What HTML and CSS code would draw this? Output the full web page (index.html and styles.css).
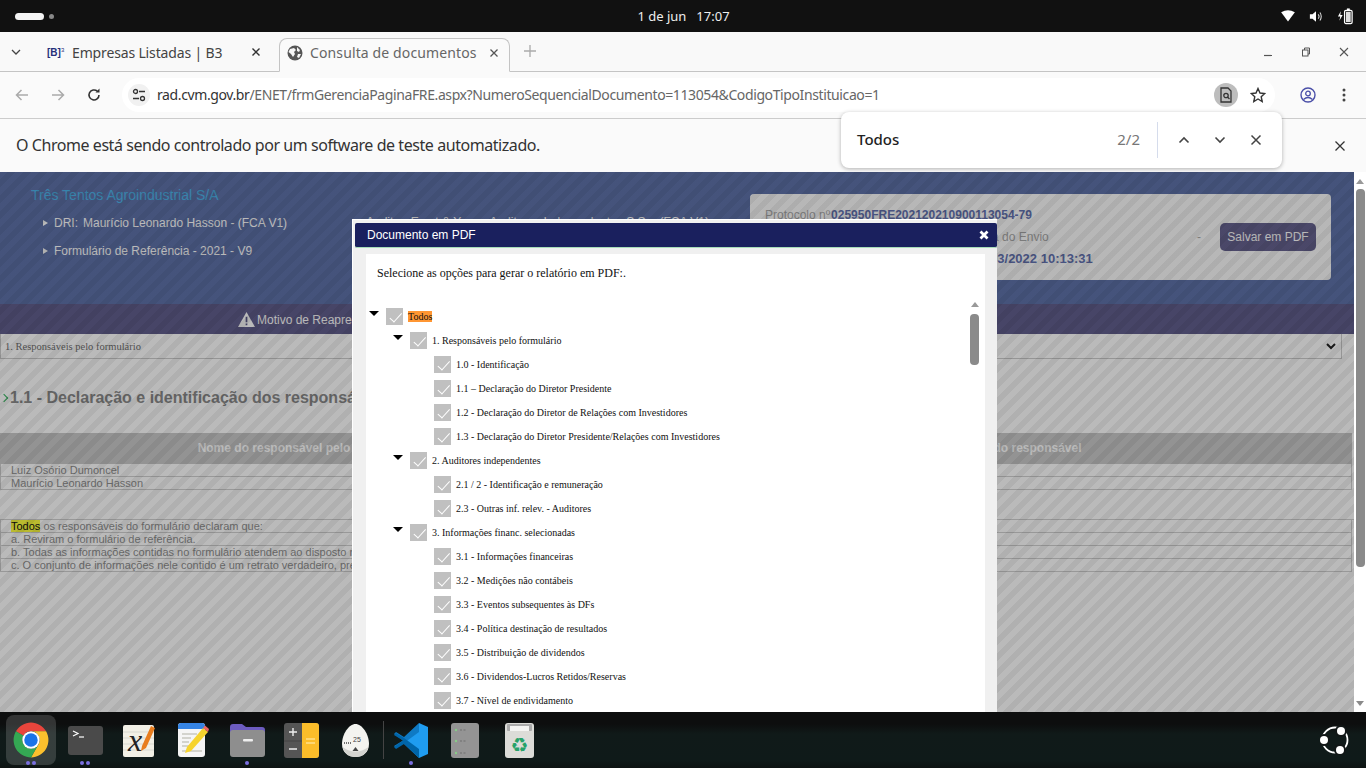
FILE: index.html
```html
<!DOCTYPE html>
<html lang="pt-BR">
<head>
    <meta charset="utf-8">
    <title>Consulta de documentos</title>
    <link rel="stylesheet" href="styles.css">
</head>
<body>
<div class="topbar">
    <div class="workspaces"><span class="ws_pill"></span><span class="ws_dot"></span></div>
    <div class="clock"><span>1 de jun</span><span>17:07</span></div>
    <div class="tray">
        <svg width="14" height="12" viewBox="0 0 16 14"><path d="M0 2.5Q8-2 16 2.5L8 13.5Z" fill="#fff"/></svg>
        <svg width="14" height="13" viewBox="0 0 16 14"><path d="M1 4.5H4L8 1V13L4 9.5H1Z" fill="#fff"/><path d="M10.5 4.5Q12.5 7 10.500 9.500M12.500 2.500Q15.500 7 12.500 11.500" fill="none" stroke="#ddd" stroke-width="1.2"/></svg>
        <svg width="17" height="18" viewBox="0 0 18 18"><path d="M4 4L1 9.500H3.500L2.500 14L6 8H3.500Z" fill="#fff"/><rect x="8" y="3" width="8" height="14" rx="1.500" fill="none" stroke="#fff" stroke-width="1.300"/><rect x="10.500" y="1" width="3" height="2" fill="#fff"/><rect x="9.500" y="4.500" width="5" height="11" fill="#ddd"/></svg>
    </div>
</div>

<div class="tabstrip">
    <svg class="tab_menu" width="10" height="6" viewBox="0 0 10 6"><path d="M1 1L5 5L9 1" fill="none" stroke="#444" stroke-width="1.3"/></svg>
    <div class="tab">
        <span class="b3_icon">[B]<sup>3</sup></span>
        <span class="tab_title">Empresas Listadas | B3</span>
        <svg class="tab_close" width="10" height="10" viewBox="0 0 10 10"><path d="M1.500 1.500L8.500 8.500M8.500 1.500L1.500 8.500" stroke="#333" stroke-width="1.400"/></svg>
    </div>
    <div class="tab tab_active">
        <svg width="16" height="16" viewBox="0 0 16 16"><circle cx="8" cy="8" r="7.500" fill="#555"/><path d="M3 4L7 3L9 5L7 7L8 9L6 12L4 9L1.500 7ZM10 2L13 5L12 7L10 6ZM11 9H14L12 13L10 12Z" fill="#f5f5f5"/></svg>
        <span class="tab_title">Consulta de documentos</span>
        <svg class="tab_close" width="10" height="10" viewBox="0 0 10 10"><path d="M1.500 1.500L8.500 8.500M8.500 1.500L1.500 8.500" stroke="#555" stroke-width="1.300"/></svg>
    </div>
    <svg class="new_tab" width="12" height="12" viewBox="0 0 12 12"><path d="M6 0V12M0 6H12" stroke="#aaa" stroke-width="1.300"/></svg>
    <div class="window_btns">
        <svg width="10" height="10" viewBox="0 0 10 10"><path d="M1 8.500H9" stroke="#555" stroke-width="1.200"/></svg>
        <svg width="10" height="10" viewBox="0 0 10 10"><rect x="1.500" y="3" width="5.500" height="6" fill="none" stroke="#555"/><path d="M3.500 3V1H8.500V7H7" fill="none" stroke="#555"/></svg>
        <svg width="10" height="10" viewBox="0 0 10 10"><path d="M1 1L9 9M9 1L1 9" stroke="#555" stroke-width="1.100"/></svg>
    </div>
</div>

<div class="toolbar">
    <svg class="nav_btn" width="16" height="16" viewBox="0 0 16 16"><path d="M14 8H2.500M7.500 3L2.500 8L7.500 13" fill="none" stroke="#aaa" stroke-width="1.500"/></svg>
    <svg class="nav_btn" width="16" height="16" viewBox="0 0 16 16"><path d="M2 8H13.500M8.500 3L13.500 8L8.500 13" fill="none" stroke="#aaa" stroke-width="1.500"/></svg>
    <svg class="nav_btn" width="16" height="16" viewBox="0 0 16 16"><path d="M13 8A5 5 0 1 1 11.300 4.200" fill="none" stroke="#333" stroke-width="1.600"/><path d="M9.500 5.500H13.500V1.500Z" fill="#333"/></svg>
    <div class="omnibox">
        <span class="tune_icon">
            <svg width="14" height="14" viewBox="0 0 14 14"><circle cx="3.500" cy="3.500" r="2" fill="none" stroke="#333" stroke-width="1.300"/><path d="M7 3.500H13M1 10.500H7" stroke="#333" stroke-width="1.300"/><circle cx="10.500" cy="10.500" r="2" fill="none" stroke="#333" stroke-width="1.300"/></svg>
        </span>
        <span class="url"><b>rad.cvm.gov.br</b>/ENET/frmGerenciaPaginaFRE.aspx?NumeroSequencialDocumento=113054&amp;CodigoTipoInstituicao=1</span>
        <span class="lens_btn">
            <svg width="12" height="16" viewBox="0 0 12 16"><path d="M1 1H8L11 4V15H1Z" fill="none" stroke="#333" stroke-width="1.300"/><circle cx="6" cy="8.500" r="2.200" fill="none" stroke="#333" stroke-width="1.300"/><path d="M7.500 10L9.500 12" stroke="#333" stroke-width="1.300"/></svg>
        </span>
        <svg class="star_icon" width="16" height="16" viewBox="0 0 16 16"><path d="M8 1.500L10 6L14.800 6.500L11.200 9.700L12.200 14.500L8 12L3.800 14.500L4.800 9.700L1.200 6.500L6 6Z" fill="none" stroke="#333" stroke-width="1.400"/></svg>
    </div>
    <svg class="profile_icon" width="16" height="16" viewBox="0 0 16 16"><circle cx="8" cy="8" r="7" fill="none" stroke="#4a4fa8" stroke-width="1.400"/><circle cx="8" cy="6.500" r="2.300" fill="none" stroke="#4a4fa8" stroke-width="1.300"/><path d="M3.500 12.500Q8 8.500 12.500 12.500" fill="none" stroke="#4a4fa8" stroke-width="1.300"/></svg>
    <svg class="dots_icon" width="4" height="14" viewBox="0 0 4 14"><circle cx="2" cy="2" r="1.500" fill="#444"/><circle cx="2" cy="7" r="1.500" fill="#444"/><circle cx="2" cy="12" r="1.500" fill="#444"/></svg>
</div>

<div class="infobar">
    <span>O Chrome está sendo controlado por um software de teste automatizado.</span>
    <svg width="10" height="10" viewBox="0 0 10 10"><path d="M0.500 0.500L9.500 9.500M9.500 0.500L0.500 9.500" stroke="#333" stroke-width="1.300"/></svg>
</div>

<div class="findbar">
    <span class="find_text">Todos</span>
    <span class="find_count">2/2</span>
    <span class="find_sep"></span>
    <svg width="12" height="8" viewBox="0 0 12 8"><path d="M1.500 6.500L6 2L10.500 6.500" fill="none" stroke="#444" stroke-width="1.600"/></svg>
    <svg width="12" height="8" viewBox="0 0 12 8"><path d="M1.500 1.500L6 6L10.500 1.500" fill="none" stroke="#444" stroke-width="1.600"/></svg>
    <svg width="12" height="12" viewBox="0 0 12 12"><path d="M1.500 1.500L10.500 10.500M10.500 1.500L1.500 10.500" stroke="#444" stroke-width="1.500"/></svg>
</div>

<div class="viewport">
    <div class="page">
        <div class="page_header">
            <div class="header_left">
                <div class="company">Três Tentos Agroindustrial S/A</div>
                <div class="header_line"><i class="bullet"></i><span class="dri">DRI:</span>Maurício Leonardo Hasson - (FCA V1)</div>
                <div class="header_line"><i class="bullet"></i>Formulário de Referência - 2021 - V9</div>
            </div>
            <div class="header_mid">Auditor: Ernst &amp; Young Auditores Independentes S.S. - (FCA V1)</div>
            <div class="info_box">
                <div class="info_rows">
                    <div>Protocolo nº<b>025950FRE202120210900113054-79</b></div>
                    <div class="info_send"><span>Data/Hora do Envio</span><span>-</span></div>
                    <div class="info_date"><b>18/03/2022 10:13:31</b></div>
                </div>
                <span class="pdf_btn">Salvar em PDF</span>
            </div>
        </div>
        <div class="motive_bar">
            <svg width="17" height="15" viewBox="0 0 16 14"><path d="M8 0L16 14H0Z" fill="#c4c4c4"/><path d="M7.200 4.500H8.800V9.500H7.200ZM7.200 10.700H8.800V12.300H7.200Z" fill="#46446a"/></svg>
            <span>Motivo de Reapresentação: Atualização de informações</span>
        </div>
        <div class="section_select">
            <span>1. Responsáveis pelo formulário</span>
            <svg width="10" height="7" viewBox="0 0 10 7"><path d="M1 1L5 5L9 1" fill="none" stroke="#222" stroke-width="2"/></svg>
        </div>
        <h2 class="section_title"><i class="green_arrow"></i>1.1 - Declaração e identificação dos responsáveis</h2>
        <div class="resp_head">
            <span>Nome do responsável pelo preenchimento do formulário</span>
            <span class="resp_head_right">Cargo do responsável</span>
        </div>
        <div class="line_row">Luiz Osório Dumoncel</div>
        <div class="line_row">Maurício Leonardo Hasson</div>
        <div class="declare">
            <div class="line_row"><mark>Todos</mark> os responsáveis do formulário declaram que:</div>
            <div class="line_row">a. Reviram o formulário de referência.</div>
            <div class="line_row">b. Todas as informações contidas no formulário atendem ao disposto na Instrução CVM</div>
            <div class="line_row">c. O conjunto de informações nele contido é um retrato verdadeiro, preciso e completo</div>
        </div>
        <div class="overlay"></div>

        <div class="modal">
            <div class="modal_title">
                <span>Documento em PDF</span>
                <svg width="10" height="10" viewBox="0 0 10 10"><path d="M1.500 1.500L8.500 8.500M8.500 1.500L1.500 8.500" stroke="#fff" stroke-width="2.800"/></svg>
            </div>
            <div class="modal_body">
                <p class="modal_intro">Selecione as opções para gerar o relatório em PDF:.</p>
                <div class="tree_wrap">
                    <div class="tree">
                        <div class="tree_row lvl0"><i class="caret"></i><i class="chk"></i><span class="hit">Todos</span></div>
                        <div class="tree_row lvl1"><i class="caret"></i><i class="chk"></i><span>1. Responsáveis pelo formulário</span></div>
                        <div class="tree_row lvl2"><i class="chk"></i><span>1.0 - Identificação</span></div>
                        <div class="tree_row lvl2"><i class="chk"></i><span>1.1 – Declaração do Diretor Presidente</span></div>
                        <div class="tree_row lvl2"><i class="chk"></i><span>1.2 - Declaração do Diretor de Relações com Investidores</span></div>
                        <div class="tree_row lvl2"><i class="chk"></i><span>1.3 - Declaração do Diretor Presidente/Relações com Investidores</span></div>
                        <div class="tree_row lvl1"><i class="caret"></i><i class="chk"></i><span>2. Auditores independentes</span></div>
                        <div class="tree_row lvl2"><i class="chk"></i><span>2.1 / 2 - Identificação e remuneração</span></div>
                        <div class="tree_row lvl2"><i class="chk"></i><span>2.3 - Outras inf. relev. - Auditores</span></div>
                        <div class="tree_row lvl1"><i class="caret"></i><i class="chk"></i><span>3. Informações financ. selecionadas</span></div>
                        <div class="tree_row lvl2"><i class="chk"></i><span>3.1 - Informações financeiras</span></div>
                        <div class="tree_row lvl2"><i class="chk"></i><span>3.2 - Medições não contábeis</span></div>
                        <div class="tree_row lvl2"><i class="chk"></i><span>3.3 - Eventos subsequentes às DFs</span></div>
                        <div class="tree_row lvl2"><i class="chk"></i><span>3.4 - Política destinação de resultados</span></div>
                        <div class="tree_row lvl2"><i class="chk"></i><span>3.5 - Distribuição de dividendos</span></div>
                        <div class="tree_row lvl2"><i class="chk"></i><span>3.6 - Dividendos-Lucros Retidos/Reservas</span></div>
                        <div class="tree_row lvl2"><i class="chk"></i><span>3.7 - Nível de endividamento</span></div>
                    </div>
                    <div class="tree_scroll">
                        <i class="arrow_up"></i>
                        <i class="tree_thumb"></i>
                    </div>
                </div>
            </div>
        </div>
    </div>
    <div class="page_scroll">
        <i class="arrow_up"></i>
        <i class="page_thumb"></i>
        <i class="arrow_down"></i>
    </div>
</div>

<div class="dock">
    <div class="dock_item dock_active">
        <svg width="38" height="38" viewBox="0 0 48 48">
            <path d="M4.950 13A22 22 0 0 1 43.050 13H24A11 11 0 0 0 14.470 18.500Z" fill="#e8453c"/>
            <path d="M43.050 13A22 22 0 0 1 24 46L33.530 29.500A11 11 0 0 0 24 13Z" fill="#fbc02d"/>
            <path d="M24 46A22 22 0 0 1 4.950 13L14.470 18.500A11 11 0 0 0 33.530 29.500Z" fill="#34a853"/>
            <circle cx="24" cy="24" r="11" fill="#fff"/><circle cx="24" cy="24" r="8.500" fill="#1a73e8"/>
        </svg>
        <div class="dock_dots"><i></i><i></i></div>
    </div>
    <div class="dock_item">
        <svg width="35" height="29" viewBox="0 0 35 29"><rect width="35" height="29" rx="3" fill="#4a4a4a"/><path d="M5 5L10 7.500L5 10" fill="none" stroke="#fff" stroke-width="1.200"/><path d="M11 11H16" stroke="#fff" stroke-width="1.200"/></svg>
        <div class="dock_dots"><i></i><i></i></div>
    </div>
    <div class="dock_item">
        <svg width="33" height="34" viewBox="0 0 33 34"><rect y="2" width="31" height="32" rx="2" fill="#f2f0e6"/><path d="M0 9H31M0 15H31M0 21H31M0 27H31" stroke="#d8d8d0"/><text x="5" y="28" class="dock_x">x</text><path d="M19 23L28 3L32 5L23 25L18 28Z" fill="#e87d1e"/></svg>
        <div class="dock_dots"></div>
    </div>
    <div class="dock_item">
        <svg width="33" height="36" viewBox="0 0 33 36"><rect x="1" y="1" width="27" height="34" rx="3" fill="#f5f5f5"/><path d="M1 7V4Q1 1 4 1H25Q28 1 28 4V7Z" fill="#3584e4"/><path d="M5 12H20M5 16H14M5 20H12M5 24H12M5 29H25" stroke="#c8c8c0" stroke-width="1.500"/><path d="M8 31L10 25L26 6L31 10L14 29Z" fill="#f6d32d"/><path d="M26 6L28 3.500L32 7L31 10Z" fill="#e66"/></svg>
        <div class="dock_dots"></div>
    </div>
    <div class="dock_item">
        <svg width="35" height="34" viewBox="0 0 35 34"><path d="M0 4Q0 1 3 1H12L16 4H32Q35 4 35 7V12H0Z" fill="#6d5cc0"/><rect y="7" width="35" height="27" rx="3" fill="#8e8e8e"/><rect x="13" y="16" width="10" height="2.500" rx="1" fill="#eee"/></svg>
        <div class="dock_dots"><i></i></div>
    </div>
    <div class="dock_item">
        <svg width="35" height="35" viewBox="0 0 35 35"><rect width="35" height="35" rx="3" fill="#555"/><path d="M18 0H32Q35 0 35 3V32Q35 35 32 35H18Z" fill="#fbbd2a"/><path d="M0 18H18" stroke="#444"/><path d="M5 9H13M9 5V13M5 26H13" stroke="#eee" stroke-width="1.400"/><path d="M22 16H31M22 20H31" stroke="#ffe08a" stroke-width="1.600"/></svg>
        <div class="dock_dots"></div>
    </div>
    <div class="dock_item">
        <svg width="27" height="33" viewBox="0 0 27 33"><path d="M13.500 0C20 0 27 10 27 20C27 28 21 33 13.500 33C6 33 0 28 0 20C0 10 7 0 13.500 0Z" fill="#f4f4f0"/><path d="M0.500 23Q13.500 32 26.500 23Q24 33 13.500 33Q3 33 0.500 23Z" fill="#d4d4d0"/><path d="M2 19H10" stroke="#444" stroke-width="1.500" stroke-dasharray="1 1"/><text x="11" y="18" class="egg_num">25</text><path d="M10.500 27H16.500L13.500 23Z" fill="#444"/></svg>
        <div class="dock_dots"></div>
    </div>
    <span class="dock_sep"></span>
    <div class="dock_item">
        <svg width="34" height="35" viewBox="0 0 34 35"><path d="M25 0L34 4V31L25 35L8 19L25 7Z" fill="#1f9cf0"/><path d="M25 0V9L10 20L2 25L0 23L9 17.500L0 11L2 9L10 14Z" fill="#0f7ac4"/><path d="M25 35V26L10 15L2 10L0 12L9 17.500L0 24L2 26L10 21Z" fill="#0065a9"/></svg>
        <div class="dock_dots"><i></i></div>
    </div>
    <div class="dock_item">
        <svg width="28" height="35" viewBox="0 0 28 35"><rect width="28" height="35" rx="3" fill="#949494"/><circle cx="5" cy="7" r="1.200" fill="#8c8"/><circle cx="5" cy="18" r="1.200" fill="#8c8"/><circle cx="5" cy="30" r="1.200" fill="#8c8"/><path d="M9 7H15M9 18H15M9 30H15" stroke="#6e6e6e" stroke-width="1.200" stroke-dasharray="2 1.500"/></svg>
        <div class="dock_dots"></div>
    </div>
    <div class="dock_item">
        <svg width="29" height="35" viewBox="0 0 29 35"><rect width="29" height="35" rx="3" fill="#dcdcd8"/><rect x="2" y="1" width="25" height="7" rx="1" fill="#aaa"/><rect x="5" y="3" width="19" height="5" fill="#f4f4f2"/><text x="14.500" y="29" class="recycle">♻</text></svg>
        <div class="dock_dots"></div>
    </div>
    <svg class="ubuntu_logo" width="30" height="30" viewBox="0 0 30 30"><circle cx="15" cy="15" r="12.500" fill="none" stroke="#fff" stroke-width="1.800"/><circle cx="21" cy="6" r="6" fill="#121717"/><circle cx="4" cy="15" r="6" fill="#121717"/><circle cx="20" cy="25" r="6" fill="#121717"/><circle cx="21" cy="6" r="4" fill="#fff"/><circle cx="4" cy="15" r="4" fill="#fff"/><circle cx="20" cy="25" r="4" fill="#fff"/></svg>
</div>
</body>
</html>
```

FILE: styles.css
```css
* {
    box-sizing: border-box;
}
body {
    margin: 0;
    width: 1366px;
    height: 768px;
    overflow: hidden;
    position: relative;
    display: flex;
    flex-direction: column;
    font-family: "Noto Sans", sans-serif;
    background-color: #111;
}
svg {
    display: block;
    flex: none;
}
i {
    display: block;
}

/* ubuntu top bar */
.topbar {
    height: 32px;
    flex: none;
    background-color: #111;
    color: #eee;
    display: flex;
    align-items: center;
    position: relative;
    padding: 0 12px 0 15px;
    justify-content: space-between;
}
.workspaces {
    display: flex;
    align-items: center;
    gap: 5px;
}
.ws_pill {
    width: 29px;
    height: 7px;
    border-radius: 4px;
    background-color: #f4f4f4;
}
.ws_dot {
    width: 5px;
    height: 5px;
    border-radius: 50%;
    background-color: #888;
}
.clock {
    display: flex;
    gap: 10px;
    font-size: 13px;
    margin-left: 32px;
}
.tray {
    display: flex;
    align-items: center;
    gap: 14px;
}

/* chrome tabs */
.tabstrip {
    height: 39px;
    flex: none;
    background-color: #f9f9f9;
    display: flex;
    align-items: flex-end;
    position: relative;
    padding-left: 11px;
}
.tab_menu {
    margin: 0 26px 16px 0;
}
.tab {
    height: 33px;
    width: 232px;
    display: flex;
    align-items: center;
    padding: 0 0 5px 21px;
    gap: 7px;
    font-size: 14px;
    letter-spacing: -0.15px;
    color: #444;
}
.tab:first-of-type {
    padding-left: 0;
}
.b3_icon {
    font-family: "Liberation Sans", sans-serif;
    font-size: 10px;
    font-weight: bold;
    color: #26307a;
    width: 18px;
    letter-spacing: 0;
    white-space: nowrap;
}
.b3_icon sup {
    font-size: 6px;
    line-height: 0;
    font-weight: normal;
}
.tab_title {
    flex: 1;
    white-space: nowrap;
}
.tab .tab_close {
    margin-right: 18px;
}
.tab_active {
    width: 231px;
    padding-left: 7px;
    border: 1px solid #c4c4c4;
    border-bottom: 1px solid #fafafa;
    border-radius: 8px 8px 0 0;
    background-color: #fafafa;
    color: #666;
    height: 34px;
    margin-bottom: -1px;
    letter-spacing: 0.12px;
    z-index: 2;
}
.tab_active .tab_close {
    margin-right: 10px;
}
.new_tab {
    margin: 0 0 14px 14px;
}
.window_btns {
    margin-left: auto;
    display: flex;
    gap: 28px;
    padding: 0 17px 14px 0;
}

/* chrome toolbar */
.toolbar {
    height: 48px;
    flex: none;
    background-color: #fafafa;
    border-top: 1px solid #c4c4c4;
    border-bottom: 1px solid #ccc;
    display: flex;
    align-items: center;
    padding-left: 14px;
    gap: 20px;
}
.omnibox {
    width: 1153px;
    height: 34px;
    margin-left: 0;
    border-radius: 17px;
    background-color: #fff;
    display: flex;
    align-items: center;
    padding-left: 6px;
    font-size: 14px;
    color: #666;
    letter-spacing: -0.39px;
}
.tune_icon {
    width: 22px;
    height: 22px;
    border-radius: 50%;
    background-color: #f1f1f1;
    display: flex;
    align-items: center;
    justify-content: center;
}
.url {
    margin-left: 7px;
    padding-bottom: 2px;
    flex: 1;
    white-space: nowrap;
}
.url b {
    font-weight: normal;
    color: #333;
}
.lens_btn {
    width: 24px;
    height: 24px;
    border-radius: 50%;
    background-color: #bdbdbd;
    display: flex;
    align-items: center;
    justify-content: center;
}
.star_icon {
    margin: 0 9px 0 12px;
}
.profile_icon {
    margin-left: 5px;
}
.dots_icon {
    margin-left: 6px;
}

/* chrome infobar */
.infobar {
    height: 53px;
    flex: none;
    background-color: #fafafa;
    display: flex;
    align-items: center;
    justify-content: space-between;
    padding: 0 21px 0 16px;
    font-size: 16px;
    color: #333;
    letter-spacing: -0.44px;
}
.infobar span {
    padding-bottom: 2px;
}
.findbar {
    position: absolute;
    left: 841px;
    top: 112px;
    width: 441px;
    height: 56px;
    background-color: #fff;
    border-radius: 8px;
    box-shadow: 0 1px 4px rgba(0, 0, 0, 0.3);
    display: flex;
    align-items: center;
    padding: 0 20px 0 16px;
    z-index: 5;
}
.find_text {
    flex: 1;
    font-size: 15px;
    font-weight: 500;
    color: #222;
    padding-bottom: 2px;
}
.find_count {
    font-size: 15px;
    color: #777;
    padding-bottom: 2px;
}
.find_sep {
    width: 1px;
    height: 36px;
    background-color: #d5dcec;
    margin: 0 20px 0 17px;
}
.findbar svg {
    margin-left: 24px;
}
.findbar .find_sep + svg {
    margin-left: 0;
}

/* document area */
.viewport {
    height: 540px;
    flex: none;
    display: flex;
    overflow: hidden;
}
.page {
    width: 1354px;
    height: 540px;
    position: relative;
    overflow: hidden;
    background-color: #fff;
    font-family: "Liberation Sans", sans-serif;
    font-size: 11px;
    color: #6a6a6a;
}
.overlay {
    position: absolute;
    inset: 0;
    background: repeating-linear-gradient(135deg, rgba(0, 0, 0, 0.27) 0 5.65px, rgba(0, 0, 0, 0.31) 5.65px 11.3px);
}
.page_header {
    height: 132px;
    background-color: #5e72a9;
    position: relative;
    display: flex;
    padding: 14px 23px 0 31px;
    color: #fff;
    font-size: 12px;
}
.header_left {
    width: 335px;
}
.company {
    font-size: 14px;
    line-height: 18px;
    color: #4db4ea;
    margin-bottom: 12px;
}
.header_line {
    display: flex;
    align-items: center;
    height: 14px;
    margin: 0 0 14px 12px;
}
.dri {
    margin-right: 5px;
}
.bullet {
    width: 0;
    height: 0;
    border-left: 5px solid #fff;
    border-top: 3px solid transparent;
    border-bottom: 3px solid transparent;
    margin-right: 6px;
}
.header_mid {
    width: 384px;
    padding-top: 29px;
    white-space: nowrap;
}
.info_box {
    width: 581px;
    height: 86px;
    margin-top: 8px;
    border-radius: 4px;
    background-color: #fbfbfb;
    color: #a8a8a8;
    display: flex;
    align-items: center;
    padding: 0 15px 0 15px;
}
.info_rows {
    flex: 1;
    line-height: 22px;
}
.info_rows b {
    color: #6372b0;
    margin-left: 1px;
}
.info_send {
    display: flex;
    justify-content: space-between;
    padding: 0 19px 0 179px;
}
.info_date {
    padding-left: 206px;
    font-size: 13px;
}
.pdf_btn {
    width: 96px;
    height: 28px;
    border-radius: 5px;
    background-color: #66628f;
    color: #fff;
    display: flex;
    align-items: center;
    justify-content: center;
}
.motive_bar {
    height: 30px;
    background-color: #615e8d;
    color: #fff;
    display: flex;
    align-items: center;
    gap: 2px;
    padding: 1px 0 0 238px;
    font-size: 12px;
    font-weight: normal;
}
.motive_bar svg {
    filter: brightness(1.3);
}
.section_select {
    width: 1342px;
    height: 25px;
    border: 1px solid #ccc;
    border-top: none;
    display: flex;
    align-items: center;
    justify-content: space-between;
    padding: 0 5px 0 4px;
    font-family: "Liberation Serif", serif;
    font-size: 10.5px;
    color: #707070;
}
.section_title {
    margin: 29px 0 25px;
    display: flex;
    align-items: center;
    font-size: 16px;
    line-height: 20px;
    color: #8a8a8a;
    padding-left: 3px;
}
.green_arrow {
    width: 6px;
    height: 6px;
    border-top: 1.5px solid #2fb35a;
    border-right: 1.5px solid #2fb35a;
    transform: rotate(45deg);
    margin-right: 3px;
    margin-left: -2px;
}
.resp_head {
    height: 31px;
    width: 1352px;
    padding-bottom: 2px;
    background-color: #c9c9c9;
    color: #fff;
    font-size: 12px;
    font-weight: bold;
    display: grid;
    grid-template-columns: 718px 1fr;
    align-items: center;
    text-align: center;
}
.resp_head_right {
    padding-right: 33px;
}
.line_row {
    width: 1352px;
    height: 13px;
    line-height: 12px;
    padding-left: 10px;
    border: 1px solid #d0d0d0;
    border-top: none;
    white-space: nowrap;
    color: #909090;
}
.declare {
    margin-top: 29px;
    border-top: 1px solid #d0d0d0;
}
.declare mark {
    background-color: #ffff40;
    color: #111;
}

/* modal */
.modal {
    position: absolute;
    left: 352px;
    top: 47px;
    width: 645px;
    height: 560px;
    background-color: #f0f0f0;
    border: 1px solid #fff;
    border-right: 0;
    padding: 3px 0 0 2px;
    color: #111;
    font-family: "Liberation Serif", serif;
}
.modal_title {
    height: 25px;
    width: 642px;
    background-color: #1a205e;
    border-bottom: 1px solid #a8dcb8;
    border-radius: 2px;
    color: #fff;
    font-family: "Liberation Sans", sans-serif;
    font-size: 12px;
    display: flex;
    align-items: center;
    justify-content: space-between;
    padding: 0 8px 0 12px;
}
.modal_body {
    width: 619px;
    margin: 6px 0 0 11px;
    height: 520px;
    background-color: #fff;
}
.modal_intro {
    margin: 0;
    padding: 12px 0 0 11px;
    height: 50px;
    font-size: 12px;
    line-height: 14px;
}
.tree_wrap {
    display: flex;
    padding-left: 3px;
}
.tree {
    flex: 1;
}
.tree_row {
    height: 24px;
    display: flex;
    align-items: center;
    font-size: 10px;
    color: #111;
}
.lvl0 {
    padding-left: 0;
}
.lvl1 {
    padding-left: 24px;
}
.lvl2 {
    padding-left: 65px;
}
.caret {
    width: 0;
    height: 0;
    border-top: 5px solid #000;
    border-left: 5px solid transparent;
    border-right: 5px solid transparent;
    margin: -5px 7px 0 0;
}
.chk {
    width: 17px;
    height: 17px;
    background-color: #c0c0c0;
    margin-right: 5px;
    position: relative;
}
.chk::after {
    content: "";
    position: absolute;
    left: 6.5px;
    top: 2px;
    width: 4.5px;
    height: 10.5px;
    border-right: 1.5px solid #fff;
    border-bottom: 1.5px solid #fff;
    transform: rotate(42deg);
}
.hit {
    background-color: #ff9632;
    line-height: 11px;
    margin-top: 1px;
}
.tree_scroll {
    width: 15px;
    margin-right: 3px;
    margin-top: -5px;
    display: flex;
    flex-direction: column;
    align-items: center;
}
.arrow_up {
    width: 0;
    height: 0;
    border-bottom: 5px solid #999;
    border-left: 4px solid transparent;
    border-right: 4px solid transparent;
    margin-top: 3px;
}
.arrow_down {
    width: 0;
    height: 0;
    border-top: 5px solid #8a8a8a;
    border-left: 4.5px solid transparent;
    border-right: 4.5px solid transparent;
    margin-top: auto;
    margin-bottom: 6px;
}
.tree_thumb {
    width: 9px;
    height: 51px;
    border-radius: 4px;
    background-color: #8a8a8a;
    margin-top: 7px;
}

/* page scrollbar */
.page_scroll {
    width: 12px;
    height: 540px;
    background-color: #fff;
    display: flex;
    flex-direction: column;
    align-items: center;
    padding-top: 4px;
}
.page_thumb {
    width: 9px;
    height: 378px;
    border-radius: 4px;
    background-color: #8a8a8a;
    margin-top: 5px;
}

/* ubuntu dock */
.dock {
    height: 56px;
    flex: 1;
    background: linear-gradient(180deg, #0d0e0e 0 12px, #101a19 22px, #0f1a19 48px, #0d1312 100%);
    display: flex;
    align-items: flex-start;
    padding-left: 4px;
    position: relative;
}
.dock_item {
    width: 54px;
    height: 56px;
    display: flex;
    flex-direction: column;
    align-items: center;
    justify-content: center;
    position: relative;
}
.dock_active::before {
    content: "";
    position: absolute;
    left: 2px;
    top: 3px;
    width: 50px;
    height: 50px;
    border-radius: 8px;
    background-color: rgba(255, 255, 255, 0.16);
}
.dock_item svg {
    position: relative;
}
.dock_dots {
    position: absolute;
    bottom: 3px;
    display: flex;
    gap: 2px;
}
.dock_dots i {
    width: 4px;
    height: 4px;
    border-radius: 50%;
    background-color: #7a6fe0;
}
.dock_sep {
    width: 1px;
    height: 38px;
    margin: 9px 0 0 1px;
    background-color: #444;
}
.dock_x {
    font-family: "Liberation Serif", serif;
    font-style: italic;
    font-size: 32px;
    fill: #222;
}
.egg_num {
    font-family: "Liberation Sans", sans-serif;
    font-size: 7px;
    fill: #444;
}
.recycle {
    font-family: "DejaVu Sans", sans-serif;
    font-size: 20px;
    text-anchor: middle;
    fill: #26a269;
}
.ubuntu_logo {
    position: absolute;
    left: 1320px;
    top: 13px;
}
```
